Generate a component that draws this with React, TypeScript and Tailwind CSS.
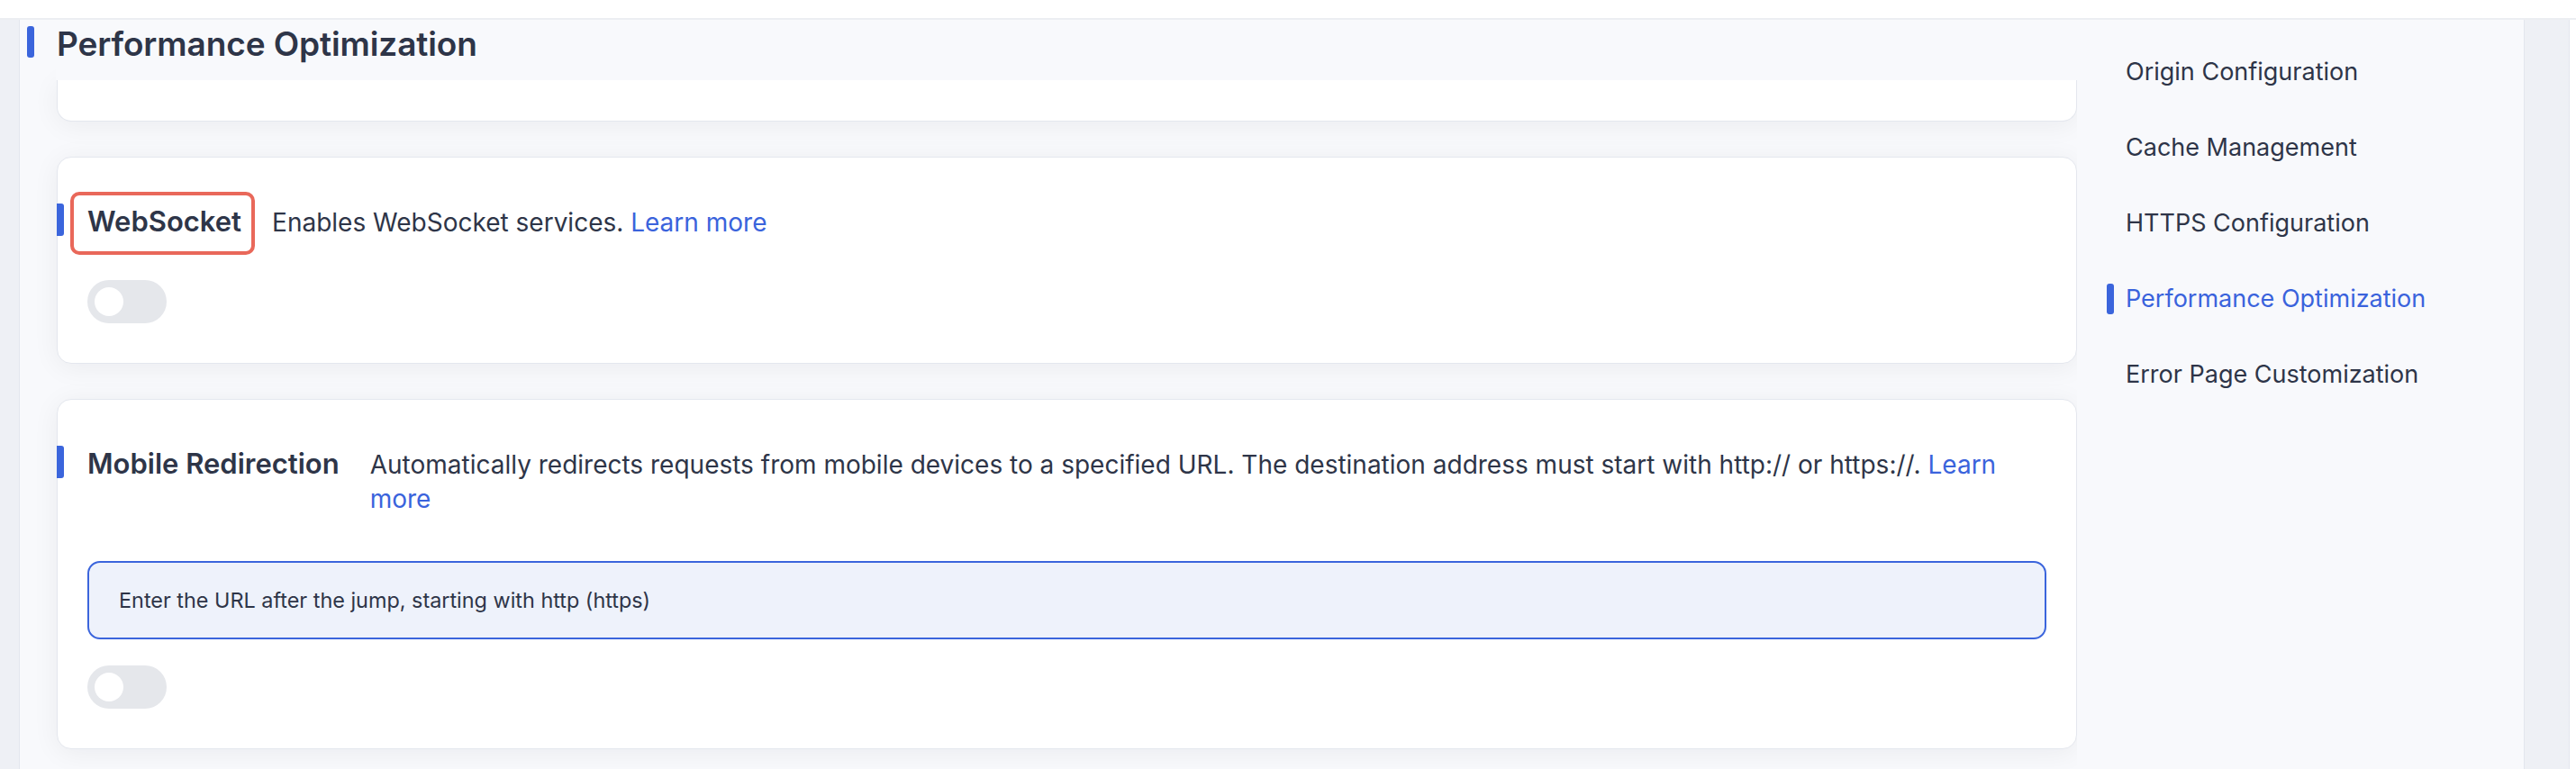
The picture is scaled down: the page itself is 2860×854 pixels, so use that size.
import React from "react";

const navItems = [
  "Origin Configuration",
  "Cache Management",
  "HTTPS Configuration",
  "Performance Optimization",
  "Error Page Customization",
];

const Toggle = () => {
  return (
    <div className="w-[88px] h-12 rounded-full bg-[#e5e7eb] flex items-center pl-2">
      <div className="w-8 h-8 rounded-full bg-white" />
    </div>
  );
};

const App = () => {
  return (
    <div className="w-[2860px] h-[854px] overflow-hidden flex flex-col bg-[#f8f9fc] text-[#2e3548] font-[Inter,'Noto_Sans',sans-serif]">
      <div className="h-[22px] shrink-0 bg-white border-b-2 border-[#eceef2]" />

      <div className="flex flex-1 min-h-0">
        <div className="w-[22px] shrink-0 bg-[#eef0f5] border-r border-[#e3e6ee]" />

        {/* main column */}
        <div className="flex-1 min-w-0 flex flex-col pl-[41px] overflow-hidden">
          <div className="relative z-10 flex items-start h-[67px] shrink-0 -ml-[33px]">
            <div className="w-2 h-[35px] mt-[7px] rounded-[3px] bg-[#3b65dc]" />
            <div className="ml-6 flex-1 h-full bg-[#f8f9fc] pt-1 pl-px">
              <h2 className="text-[37px] leading-[46px] font-semibold tracking-[-0.1px]">
                Performance Optimization
              </h2>
            </div>
          </div>

          <div className="h-[46px] shrink-0 bg-white border border-t-0 border-[#e4e7ee] rounded-b-2xl shadow-[0_4px_30px_rgba(17,24,39,0.06)]" />

          {/* websocket */}
          <div className="mt-[39px] shrink-0 bg-white border border-[#e4e7ee] rounded-2xl shadow-[0_4px_30px_rgba(17,24,39,0.06)] px-[33px] pt-[51px] pb-[44px]">
            <div className="relative flex items-baseline">
              <span className="absolute -left-[34px] top-0 w-2 h-9 rounded-r-[3px] bg-[#3b65dc]" />
              <h3 className="relative text-[31px] leading-[40px] font-semibold whitespace-nowrap">
                WebSocket
                <span className="absolute -left-[19px] -right-[15px] -top-[13px] -bottom-[17px] border-4 border-[#e9685a] rounded-[10px]" />
              </h3>
              <p className="ml-[34px] text-[28px] leading-[38px]">
                Enables WebSocket services.{" "}
                <a className="text-[#3a63dc] cursor-pointer">Learn more</a>
              </p>
            </div>
            <div className="mt-[45px]">
              <Toggle />
            </div>
          </div>

          {/* mobile redirection */}
          <div className="mt-[39px] shrink-0 bg-white border border-[#e4e7ee] rounded-2xl shadow-[0_4px_30px_rgba(17,24,39,0.06)] px-[33px] pt-[51px] pb-[44px]">
            <div className="relative flex items-baseline">
              <span className="absolute -left-[34px] top-0 w-2 h-9 rounded-r-[3px] bg-[#3b65dc]" />
              <h3 className="text-[31px] leading-[40px] font-semibold whitespace-nowrap">
                Mobile Redirection
              </h3>
              <p className="ml-[34px] flex-1 text-[28px] leading-[38px]">
                Automatically redirects requests from mobile devices to a specified URL. The
                destination address must start with http:// or https://.{" "}
                <a className="text-[#3a63dc] cursor-pointer">Learn more</a>
              </p>
            </div>
            <div className="mt-[50px] h-[87px] flex items-center pl-[33px] border-2 border-[#3b65dc] bg-[#eef2fb] rounded-[14px] text-[23.4px]">
              Enter the URL after the jump, starting with http (https)
            </div>
            <div className="mt-[29px]">
              <Toggle />
            </div>
          </div>
        </div>

        {/* right nav */}
        <div className="w-[497px] shrink-0 border-r border-[#e3e6ee] pl-[33px] pt-[38px]">
          <ul className="flex flex-col gap-[44px]">
            {navItems.map((item) => {
              const active = item === "Performance Optimization";
              return (
                <li key={item} className="flex items-center h-10">
                  <span
                    className={
                      active
                        ? "w-2 h-[34px] rounded-[3px] bg-[#3b65dc]"
                        : "w-2 h-[34px]"
                    }
                  />
                  <span
                    className={
                      active
                        ? "ml-[13px] text-[27px] text-[#3a63dc] whitespace-nowrap"
                        : "ml-[13px] text-[27px] whitespace-nowrap"
                    }
                  >
                    {item}
                  </span>
                </li>
              );
            })}
          </ul>
        </div>

        <div className="w-[50px] shrink-0 bg-[#eef0f5] border-r border-[#e3e6ee]" />
        <div className="w-[7px] shrink-0 bg-white" />
      </div>
    </div>
  );
};

export default App;
